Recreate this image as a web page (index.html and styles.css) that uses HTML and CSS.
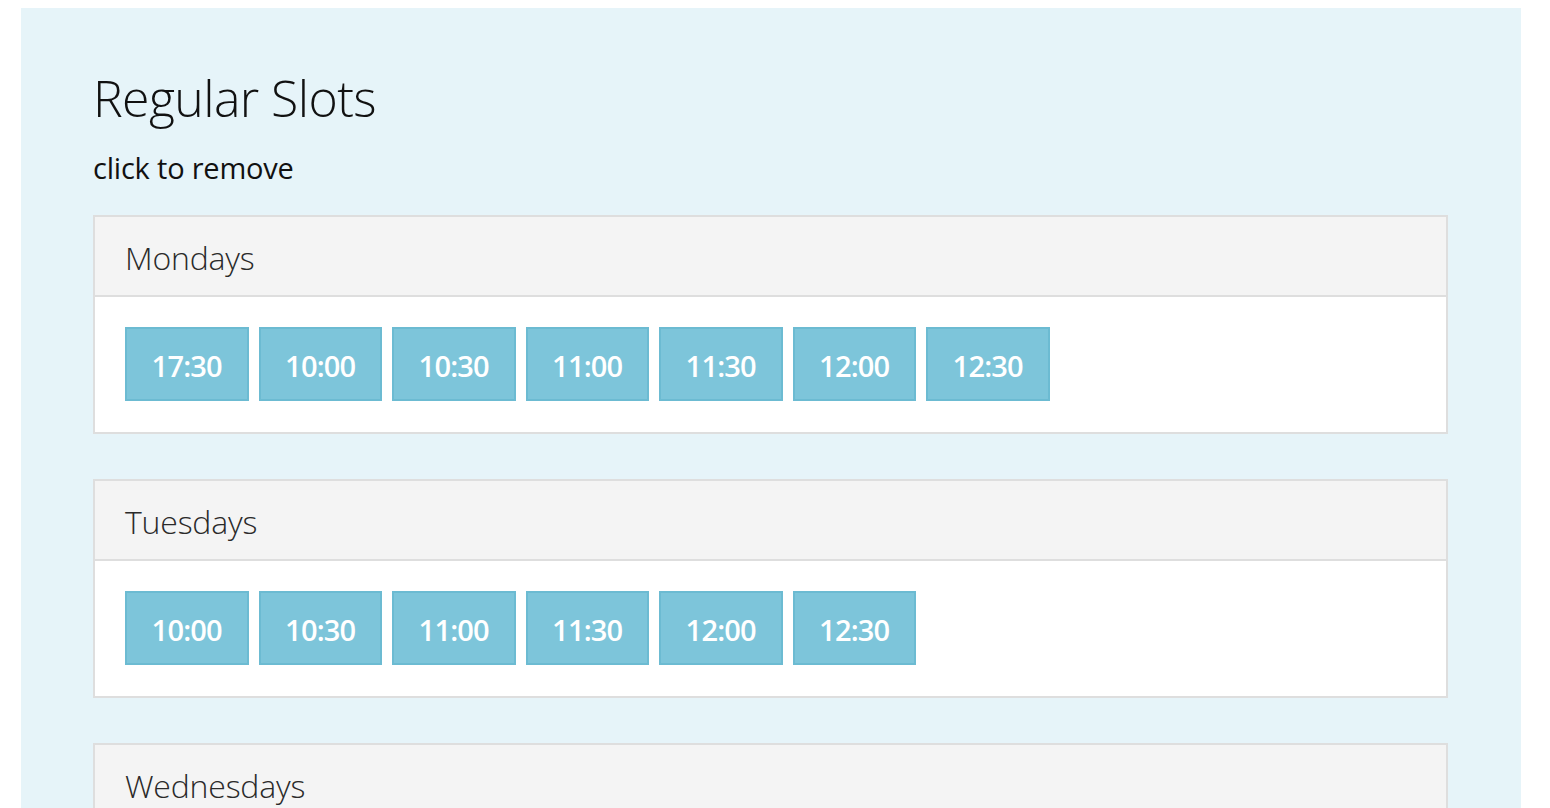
FILE: index.html
```html
<!DOCTYPE html>
<html>
<head>
<meta charset="utf-8">
<link rel="stylesheet" href="styles.css">
</head>
<body>
<div class="page">
  <h1 class="title">Regular Slots</h1>
  <p class="hint">click to remove</p>

  <section class="panel">
    <div class="panel-head">Mondays</div>
    <div class="panel-body">
      <button class="slot">17:30</button>
      <button class="slot">10:00</button>
      <button class="slot">10:30</button>
      <button class="slot">11:00</button>
      <button class="slot">11:30</button>
      <button class="slot">12:00</button>
      <button class="slot">12:30</button>
    </div>
  </section>

  <section class="panel">
    <div class="panel-head">Tuesdays</div>
    <div class="panel-body">
      <button class="slot">10:00</button>
      <button class="slot">10:30</button>
      <button class="slot">11:00</button>
      <button class="slot">11:30</button>
      <button class="slot">12:00</button>
      <button class="slot">12:30</button>
    </div>
  </section>

  <section class="panel">
    <div class="panel-head">Wednesdays</div>
    <div class="panel-body">
      <button class="slot">10:00</button>
      <button class="slot">10:30</button>
      <button class="slot">11:00</button>
    </div>
  </section>
</div>
</body>
</html>
```
FILE: styles.css
```css
html, body {
  margin: 0;
  padding: 0;
  background: #ffffff;
  font-family: "Open Sans", "Liberation Sans", sans-serif;
}
body {
  padding-top: 8px;
}
.page {
  width: 1500px;
  margin-left: 21px;
  box-sizing: border-box;
  background: #e6f4f9;
  padding: 60px 73px 40px 72px;
  min-height: 900px;
}
.title {
  margin: 0;
  font-weight: 300;
  font-size: 50px;
  line-height: 60px;
  color: #111;
  letter-spacing: -0.6px;
}
.hint {
  margin: 22px 0 0;
  font-size: 29px;
  line-height: 36px;
  color: #111;
  font-weight: 400;
  letter-spacing: -0.2px;
}
.panel {
  margin-top: 29px;
  background: #fff;
  border: 2px solid #dedede;
}
.panel + .panel {
  margin-top: 45px;
}
.panel-head {
  background: #f4f4f4;
  border-bottom: 2px solid #dedede;
  height: 80px;
  box-sizing: border-box;
  padding: 2px 30px 0;
  display: flex;
  align-items: center;
  font-size: 32px;
  font-weight: 300;
  color: #2a2a2a;
  letter-spacing: -0.2px;
}
.panel-body {
  padding: 30px 30px 31px;
  display: flex;
  gap: 10px;
}
.slot {
  width: 123.5px;
  height: 74px;
  box-sizing: border-box;
  background: #7dc5da;
  border: 2px solid #6cbbd2;
  color: #fff;
  font-family: "Open Sans", "Liberation Sans", sans-serif;
  font-size: 29px;
  font-weight: 600;
  letter-spacing: -0.8px;
  padding: 2px 0 0;
}
```
